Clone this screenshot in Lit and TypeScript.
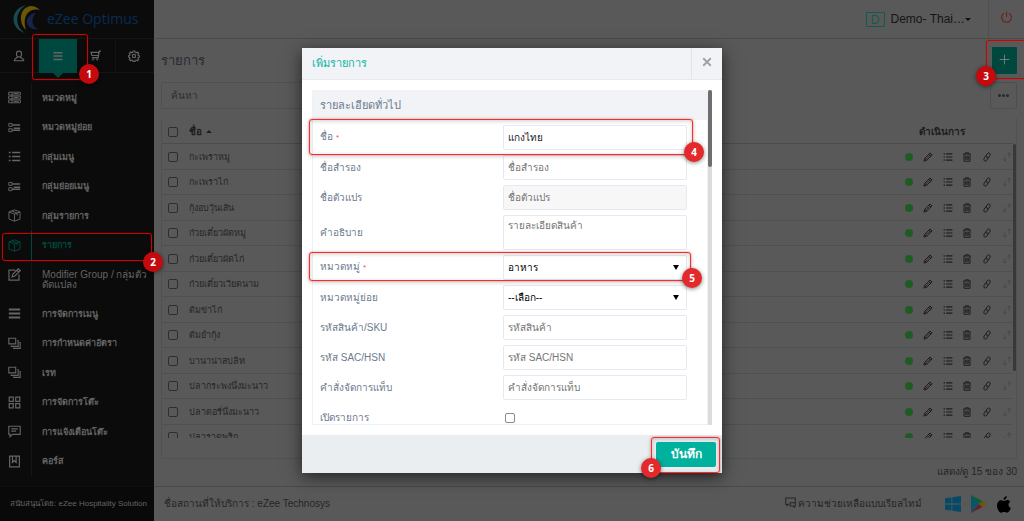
import { LitElement, html, css, svg, nothing } from "lit";
import { customElement, property, state } from "lit/decorators.js";

const ICONS: Record<string, unknown> = {
  user: svg`<path stroke-width="1.500" d="M8 1.500c2.200 0 3.400 1.600 3.400 3.600 0 2-1.200 4.400-3.400 4.400S4.600 7.100 4.600 5.100C4.600 3.100 5.800 1.500 8 1.500zM6.300 9.200c-.2 1.800-4.300 1.300-4.600 5.100h12.600c-.3-3.800-4.400-3.300-4.600-5.100"/>`,
  bars: svg`<path stroke-width="2" d="M2 3.500h12M2 8h12M2 12.500h12"/>`,
  menu: svg`<path stroke-width="2.600" d="M1 3h14M1 8h14M1 13h14"/>`,
  cart: svg`<path stroke-width="1.800" d="M16 1.500h-2.500L11.800 11H3M13 3.500H1.500L2.800 8h9.400"/><circle cx="4.500" cy="13.700" r="1.200"/><circle cx="10.500" cy="13.700" r="1.200"/>`,
  gear: svg`<circle cx="8" cy="8" r="2.200" stroke-width="1.500"/><path stroke-width="1.600" d="M6.800 1.300h2.400l.4 1.800 1.300.6 1.700-1 1.600 1.700-1 1.600.6 1.300 1.500.3v1.900l-1.600.4-.5 1.300 1 1.600-1.700 1.600-1.600-1-1.300.5-.4 1.700H6.800l-.4-1.700-1.300-.5-1.600 1-1.700-1.600 1-1.600-.6-1.300-1.500-.4V7.700l1.500-.4.6-1.300-1-1.600 1.700-1.700 1.600 1 1.300-.6z"/>`,
  server: svg`<path d="M.8 1.500h14.400v3.400H.8zM.8 6.300h14.400v3.400H.8zM.8 11.100h14.400v3.400H.8zM5 1.500v13M7 3.200h6M7 8h6M7 12.800h6"/>`,
  sublist: svg`<path d="M1 3h4v3.600H1zM1 9.500h4v3.600H1z"/><path stroke-width="1.800" d="M5 4.800h10M5 11.300h10M7 8.800h8"/>`,
  list: svg`<path stroke-width="1.900" d="M1 3h2.200M1 8h2.200M1 13h2.200M5 3h10M5 8h10M5 13h10"/>`,
  box: svg`<path d="M8 1l6.800 2.600v8.800L8 15l-6.800-2.600V3.600zM1.200 3.600L8 6.300l6.800-2.700M8 6.300V15M4.500 2.300l6.800 2.700v3"/>`,
  edit: svg`<path stroke-width="1.500" d="M9 2.500H1.200v12.300h12.300V8M5 11l.8-3.200L12.600 1l2.400 2.300-6.900 6.900zM11 2.800l2.200 2.200"/>`,
  copies: svg`<path stroke-width="1.400" d="M1 1.500h8.500v7H1zM11.500 4.500h1v7h-8.500v-1M14 7h1v7H7v-1"/>`,
  grid: svg`<path stroke-width="1.500" d="M1.500 1.500h5v5h-5zM9.500 1.500h5v5h-5zM1.500 9.500h5v5h-5zM9.500 9.500h5v5h-5z"/>`,
  message: svg`<path stroke-width="1.400" d="M1 1.500h14v10H5.500L2.500 14.500v-3H1zM4 4.800h8M4 7.500h6"/>`,
  book: svg`<path stroke-width="1.500" d="M2 1.500h12v13H2zM5.500 1.500V9L7.700 7 10 9V1.500"/>`,
  pencil: svg`<path stroke-width="1.600" d="M1.500 14.500l1.300-4.300 8.500-8.700 3.200 3.200-8.700 8.500zM9.500 3.500l3 3M2.800 10.200l3 3"/><path stroke-width="1" d="M5 11l6-6"/>`,
  trash: svg`<path stroke-width="1.600" d="M2 3.200h12M5.500 3V1.300h5V3M3.200 3.500v11.300h9.600V3.500M6 6v6.500M8 6v6.500M10 6v6.500"/>`,
  link: svg`<path stroke-width="1.600" d="M7.500 8.500c-1.500-1-1-2.500-.5-3.500l1.500-2.500c1.600-2.300 5.500-.5 4.500 2.500l-1.600 3C10.500 9.500 9 9.800 7.800 9M8.500 7.500c1.500 1 1 2.500.5 3.500l-1.500 2.500c-1.600 2.300-5.500.5-4.500-2.500l1.600-3C5.500 6.500 7 6.200 8.200 7"/>`,
  move: svg`<path d="M11.500 9V1.500M8.800 4.200l2.700-2.700 2.700 2.700M4.500 7v7.500M1.800 11.800l2.700 2.700 2.700-2.700"/>`,
  power: svg`<path stroke-width="1.400" d="M8 1v6.500M4.800 2.800a6 6 0 1 0 6.400 0"/>`,
  plus: svg`<path stroke-width="1.300" d="M8 1v14M1 8h14"/>`,
  close: svg`<path stroke-width="3" d="M2 2l12 12M14 2L2 14"/>`,
  chat: svg`<path stroke-width="1.500" d="M6 10.500H5L3 12.500v-2H1V1.500h14v7M7.500 8.500H15v4.500h-1.500v2L11 13H7.500z"/>`,
};

const icon = (name: string, size: number) => html`<svg
  width=${size} height=${size} viewBox="0 0 16 16" fill="none"
  stroke="currentColor" stroke-width="1.200" aria-hidden="true">${ICONS[name]}</svg>`;

const base = css`
  * { box-sizing: border-box; }
  svg { display: block; flex: none; }
  button, input, select, textarea { font: inherit; color: inherit; margin: 0; }
  button { border: 0; padding: 0; background: none; display: grid; place-items: center; cursor: pointer; }
  a { color: inherit; text-decoration: none; }
`;

@customElement("step-mark")
class StepMark extends LitElement {
  @property() n = "";
  @property() corner = "se";
  static styles = css`
    :host {
      position: absolute; box-sizing: border-box; pointer-events: none; z-index: 5;
      border: 1px solid #ff2a2a; border-radius: 3px;
      box-shadow: 0 0 1px #ff2a2a, 0 1px 4px rgba(0, 0, 0, .25), inset 0 1px 4px rgba(0, 0, 0, .2);
    }
    :host([dim]) { border-color: #d40000; box-shadow: 0 0 1px #c00000; }
    .badge {
      position: absolute; bottom: var(--drop, -8px); width: 20px; height: 20px; border-radius: 50%;
      display: grid; place-items: center; background: #e3292c; color: #fff;
      font: bold 10px/20px "Open Sans", sans-serif;
      box-shadow: 0 1px 4px rgba(0, 0, 0, .5);
    }
    :host([dim]) .badge { background: #c40a0c; }
    .se { right: -12px; }
    .sw { left: -11px; }
  `;
  render() {
    return html`<span class="badge ${this.corner}">${this.n}</span>`;
  }
}

@customElement("side-bar")
class SideBar extends LitElement {
  items = [
    ["server", "หมวดหมู่"], ["sublist", "หมวดหมู่ย่อย"], ["list", "กลุ่มเมนู"],
    ["sublist", "กลุ่มย่อยเมนู"], ["box", "กลุ่มรายการ"], ["box", "รายการ"],
    ["edit", "Modifier Group / กลุ่มตัวดัดแปลง"], ["menu", "การจัดการเมนู"],
    ["copies", "การกำหนดค่าอัตรา"], ["copies", "เรท"], ["grid", "การจัดการโต๊ะ"],
    ["message", "การแจ้งเตือนโต๊ะ"], ["book", "คอร์ส"],
  ];
  static styles = [base, css`
    :host { display: flex; flex-direction: column; background: #0b0b0b; color: #646464; min-height: 0; position: relative; }
    .brand { display: flex; align-items: center; gap: 6px; height: 39px; padding-left: 13px;
      border-bottom: 1px solid #151515; color: #082c54; font: 14px/20px "Open Sans", sans-serif; }
    .tabs { display: grid; grid-template-columns: repeat(4, 1fr); height: 34px; border-bottom: 1px solid #151515; }
    .tab { border-right: 1px solid #131313; position: relative; height: 33px; }
    .tab.on { background: #00483f; height: 34px; border: 0; }
    .tab.on::after { content: ""; position: absolute; top: 100%; left: 50%; margin-left: -5px;
      border: 5px solid transparent; border-top-color: #00483f; border-bottom: 0; }
    nav { flex: 1; display: flex; flex-direction: column; padding: 10px 0 10px; min-height: 0; }
    .item { flex: 1; display: grid; grid-template-columns: 32px 1fr; font-weight: bold; font-size: 9px; line-height: 10px; }
    .item.tall { flex: 0 0 39px; font-weight: normal; font-size: 10px; }
    .item .pic { border-right: 1px solid #161616; display: flex; align-items: center; padding-left: 8px; }
    .item .label { align-self: center; padding: 0 3px 0 10px; }
    .item.tall .pic { align-items: flex-start; padding-top: 8px; }
    .item.tall .label { align-self: start; padding-top: 10px; }
    .item.on { color: #00483f; }
    .item.on .pic { border-color: #00483f; }
    footer { height: 35px; border-top: 1px solid #0e0e0e; background: #090909; padding-left: 10px; font-size: 8px; line-height: 34px; white-space: nowrap; }
  `];
  render() {
    return html`
      <div class="brand">
        <svg width="28" height="30" viewBox="0 0 28 30" fill="none">
          <path d="M13 1C-3 5-4 24 12 29 1 22 2 8 13 1z" fill="#1c4a4c"/>
          <path d="M27 6C18-3 7 4 8 15c0 5 2 8 5 11C9 15 14 3 27 6z" fill="#6a5606"/>
          <path d="M23 9c-12 1-13 18 3 16-7-1-9-10-3-16z" fill="#18224a"/>
        </svg>
        <span>eZee Optimus</span>
      </div>
      <div class="tabs">
        <button class="tab" aria-label="ผู้ใช้">${icon("user", 12)}</button>
        <button class="tab on" aria-label="เมนู">${icon("bars", 12)}</button>
        <button class="tab" aria-label="รถเข็น">${icon("cart", 11)}</button>
        <button class="tab" aria-label="ตั้งค่า">${icon("gear", 12)}</button>
      </div>
      <nav>
        ${this.items.map(([ic, label], i) => html`
          <a href="#" class="item ${i === 5 ? "on" : ""} ${i === 6 ? "tall" : ""}">
            <span class="pic">${icon(ic, 13)}</span><span class="label">${label}</span>
          </a>`)}
      </nav>
      <footer>สนับสนุนโดย: eZee Hospitality Solution</footer>`;
  }
}

@customElement("item-table")
class ItemTable extends LitElement {
  rows = ["กะเพราหมู", "กะเพราไก่", "กุ้งอบวุ้นเส้น", "ก๋วยเตี๋ยวผัดหมู", "ก๋วยเตี๋ยวผัดไก่",
    "ก๋วยเตี๋ยวเวียดนาม", "ต้มข่าไก่", "ต้มยำกุ้ง", "บานาน่าสปลิท", "ปลากระพงนึ่งมะนาว",
    "ปลาดอรี่นึ่งมะนาว", "ปลาราดพริก"];
  static styles = [base, css`
    :host { display: flex; flex: 1; min-height: 0; border: 1px solid #525252; border-top: 0; padding-bottom: 20px; }
    .clip { flex: 1; overflow: hidden; }
    table { width: 100%; border-collapse: collapse; table-layout: fixed; font-size: 9px; line-height: 14px; }
    tr { height: 25px; }
    tbody tr:nth-child(odd) { height: 26px; }
    th, td { padding: 1px 0 0; text-align: left; border-bottom: 1px solid #505050; font-weight: normal; }
    th { font-weight: bold; font-size: 10px; color: #1e1e1e; border-color: #4c4c4c; padding-top: 3px; }
    .pick { width: 27px; padding-left: 6px; }
    .acts { width: 125px; }
    th.acts { text-align: center; padding-right: 18px; }
    input { appearance: none; display: block; width: 10px; height: 10px; border: 1px solid #2e2e2e; border-radius: 2px; }
    .sort { display: flex; align-items: center; gap: 4px; }
    .sort i { border: 3px solid transparent; border-bottom-color: #1e1e1e; border-top: 0; }
    .row { display: flex; justify-content: space-between; align-items: center; width: 107px; margin: 0 1px 0 auto; color: #1c1c1c; }
    .dot { width: 8px; height: 8px; border-radius: 50%; background: #1f5c24; }
    .faint { color: #444; }
    .bar { width: 3px; height: 227px; margin-top: 26px; background: #383838; border-radius: 2px; }
  `];
  render() {
    return html`
      <div class="clip"><table>
        <thead><tr>
          <th class="pick"><input type="checkbox" aria-label="เลือกทั้งหมด"></th>
          <th><span class="sort">ชื่อ <i></i></span></th>
          <th class="acts">ดำเนินการ</th>
        </tr></thead>
        <tbody>${this.rows.map((name) => html`<tr>
          <td class="pick"><input type="checkbox" aria-label=${name}></td>
          <td>${name}</td>
          <td class="acts"><div class="row">
            <span class="dot"></span>
            <button aria-label="แก้ไข">${icon("pencil", 10)}</button>
            <button aria-label="รายละเอียด">${icon("list", 10)}</button>
            <button aria-label="ลบ">${icon("trash", 10)}</button>
            <button aria-label="ลิงก์">${icon("link", 10)}</button>
            <button class="faint" aria-label="ย้าย">${icon("move", 10)}</button>
          </div></td>
        </tr>`)}</tbody>
      </table></div>
      <div class="bar"></div>`;
  }
}

type Field = { id: string; label: string; kind?: string; value?: string; hint?: string; need?: boolean };

@customElement("item-dialog")
class ItemDialog extends LitElement {
  @state() fields: Field[] = [
    { id: "name", label: "ชื่อ", value: "แกงไทย", need: true },
    { id: "alt", label: "ชื่อสำรอง", hint: "ชื่อสำรอง" },
    { id: "variant", label: "ชื่อตัวแปร", hint: "ชื่อตัวแปร", kind: "off" },
    { id: "desc", label: "คำอธิบาย", hint: "รายละเอียดสินค้า", kind: "area" },
    { id: "cat", label: "หมวดหมู่", value: "อาหาร", need: true, kind: "select" },
    { id: "sub", label: "หมวดหมู่ย่อย", value: "--เลือก--", kind: "select" },
    { id: "sku", label: "รหัสสินค้า/SKU", hint: "รหัสสินค้า" },
    { id: "hsn", label: "รหัส SAC/HSN", hint: "รหัส SAC/HSN" },
    { id: "tab", label: "คำสั่งจัดการแท็บ", hint: "คำสั่งจัดการแท็บ" },
    { id: "open", label: "เปิดรายการ", kind: "check" },
  ];
  static styles = [base, css`
    :host { display: flex; flex-direction: column; position: relative; width: 420px; height: 425px;
      background: #fff; color: #6c7a8e; box-shadow: 0 4px 16px rgba(0, 0, 0, .6); font-size: 10px; line-height: 14px; }
    header { display: flex; height: 32px; background: #f1f3f7; border-bottom: 1px solid #e6e9ee; }
    h2 { flex: 1; margin: 0; padding-left: 10px; font-size: 11px; line-height: 30px; font-weight: normal; color: #10b5a2; }
    .x { width: 31px; border-left: 1px solid #e2e5ea; color: #a0a2a6; padding-bottom: 4px; }
    .body { flex: 1; min-height: 0; display: flex; padding: 10px 10px 10px; }
    .panel { flex: 1; overflow: hidden; border: 1px solid #eef1f5; border-top: 0; }
    h3 { margin: 0; height: 30px; padding-left: 7px; background: #f1f3f7; font-size: 11px; line-height: 30px; font-weight: normal; }
    .form { display: grid; gap: 5px; padding: 5px 20px 0 7px; }
    .field { display: grid; grid-template-columns: 1fr 184px; align-items: center; min-height: 25px; }
    .need { color: #f44; padding-left: 3px; font-size: 8px; }
    .ctl { width: 100%; height: 25px; border: 1px solid #e4eaf0; border-radius: 2px; background: #fff;
      padding: 0 4px; color: #222; outline: 0; display: block; resize: none; }
    .ctl::placeholder { color: #757575; opacity: 1; }
    .ctl:disabled { background: #f7f7f7; }
    .area { height: 35px; padding-top: 3px; overflow: hidden; }
    .drop { position: relative; }
    .drop select { appearance: none; color: #000; }
    .drop svg { position: absolute; right: 8px; top: 10px; pointer-events: none; }
    .check { appearance: none; width: 10px; height: 10px; border: 1px solid #8a8a8a; border-radius: 2px; margin-left: 2px; }
    .track { width: 4px; background: #dcdcdc; }
    .thumb { width: 4px; height: 77px; border-radius: 2px; background: #6e6e6e; }
    footer { display: flex; justify-content: flex-end; align-items: center; height: 38px; background: #eaeef1; padding-right: 6px; }
    .save { width: 60px; height: 25px; background: #00b19d; color: #fff; border-radius: 2px; font-size: 12px; font-weight: bold; }
    .m4 { left: 7px; top: 71px; width: 384px; height: 36px; }
    .m5 { left: 7px; top: 204px; width: 382px; height: 29px; }
    .m6 { left: 349px; top: 389px; width: 69px; height: 36px; --drop: -6px; }
  `];
  control(f: Field) {
    if (f.kind === "area") return html`<textarea id=${f.id} class="ctl area" placeholder=${f.hint ?? ""}></textarea>`;
    if (f.kind === "check") return html`<input id=${f.id} class="check" type="checkbox">`;
    if (f.kind === "select") return html`<span class="drop"><select id=${f.id} class="ctl"><option>${f.value}</option></select>
      <svg width="6" height="5" viewBox="0 0 6 5"><path d="M0 0h6L3 5z"/></svg></span>`;
    return html`<input id=${f.id} class="ctl" type="text" .value=${f.value ?? ""} placeholder=${f.hint ?? ""} ?disabled=${f.kind === "off"}>`;
  }
  render() {
    return html`
      <header><h2>เพิ่มรายการ</h2><button class="x" aria-label="ปิด">${icon("close", 10)}</button></header>
      <div class="body">
        <div class="panel">
          <h3>รายละเอียดทั่วไป</h3>
          <div class="form">${this.fields.map((f) => html`<div class="field">
            <label for=${f.id}>${f.label}${f.need ? html`<span class="need">*</span>` : nothing}</label>
            ${this.control(f)}
          </div>`)}</div>
        </div>
        <div class="track"><div class="thumb"></div></div>
      </div>
      <footer><button class="save">บันทึก</button></footer>
      <step-mark class="m4" n="4"></step-mark>
      <step-mark class="m5" n="5"></step-mark>
      <step-mark class="m6" n="6" corner="sw"></step-mark>`;
  }
}

@customElement("app-root")
class AppRoot extends LitElement {
  static styles = [base, css`
    :host { display: grid; grid-template-columns: 154px 1fr; height: 100vh; position: relative; overflow: hidden;
      background: #595959; color: #262626; font: 10px/14px "Liberation Sans", sans-serif; }
    main { display: flex; flex-direction: column; min-width: 0; min-height: 0; }
    .top { display: flex; justify-content: flex-end; height: 39px; border-bottom: 1px solid #4b4b4b; }
    .who { display: flex; align-items: center; gap: 6px; padding-right: 17px; color: #151515; font-size: 12px; }
    .who b { border: 1px solid #14594f; color: #14594f; width: 19px; height: 15px; line-height: 14px; text-align: center; font-weight: normal; border-radius: 1px; }
    .who i { border: 3px solid transparent; border-top-color: #111; border-bottom: 0; margin-left: -6px; }
    .off { width: 36px; border-left: 1px solid #505050; color: #6f2020; padding-bottom: 3px; }
    .content { flex: 1; min-height: 0; display: flex; flex-direction: column; padding: 0 7px; }
    .head { display: flex; justify-content: space-between; align-items: center; height: 43px; }
    h1 { margin: 0; font-size: 13px; line-height: 20px; font-weight: normal; color: #272b31; }
    .add { width: 25px; height: 27px; background: #00483f; color: #808080; border-radius: 1px; padding-bottom: 2px; }
    .find { display: flex; justify-content: space-between; margin-bottom: 9px; }
    .find input { width: 50%; height: 27px; border: 1px solid #505050; background: none; padding: 0 9px; border-radius: 2px; }
    .find input::placeholder { color: #2e2e2e; opacity: 1; }
    .find button { width: 27px; height: 27px; border: 1px solid #4e4e4e; border-radius: 2px; }
    .count { text-align: right; padding: 6px 0 7px; line-height: 14px; }
    .foot { display: flex; align-items: center; height: 35px; border-top: 1px solid #494949; padding: 0 13px 0 10px; }
    .foot .place { flex: 1; }
    .help { display: flex; align-items: center; gap: 2px; margin-right: 23px; }
    .help svg { margin-bottom: 3px; }
    .stores { display: flex; align-items: center; gap: 10px; }
    .veil { position: absolute; inset: 0; display: grid; place-items: center; }
    .m1 { left: 32px; top: 34px; width: 56px; height: 46px; --drop: -5px; }
    .m2 { left: 2px; top: 233px; width: 150px; height: 28px; --drop: -12px; }
    .m3 { left: calc(100% - 38px); top: 40px; width: 42px; height: 39px; }
  `];
  render() {
    return html`
      <side-bar></side-bar>
      <main>
        <div class="top">
          <div class="who"><b>D</b><span>Demo- Thai…</span><i></i></div>
          <button class="off" aria-label="ออกจากระบบ">${icon("power", 13)}</button>
        </div>
        <div class="content">
          <div class="head"><h1>รายการ</h1><button class="add" aria-label="เพิ่ม">${icon("plus", 11)}</button></div>
          <div class="find">
            <input type="text" placeholder="ค้นหา" aria-label="ค้นหา">
            <button aria-label="เพิ่มเติม"><svg width="11" height="3" viewBox="0 0 11 3" fill="#252a30"><circle cx="1.500" cy="1.500" r="1.500"/><circle cx="5.500" cy="1.500" r="1.500"/><circle cx="9.500" cy="1.500" r="1.500"/></svg></button>
          </div>
          <item-table></item-table>
          <div class="count">แสดง/ดู 15 ของ 30</div>
        </div>
        <div class="foot">
          <span class="place">ชื่อสถานที่ให้บริการ : eZee Technosys</span>
          <a class="help" href="#">${icon("chat", 11)}<span>ความช่วยเหลือแบบเรียลไทม์</span></a>
          <div class="stores">
            <a href="#" aria-label="Windows"><svg width="16" height="16" viewBox="0 0 16 16" fill="#064a68"><path d="M0 2.300L6.500 1.400v6.200H0zM7.300 1.300L16 0v7.600H7.300zM0 8.400h6.500v6.200L0 13.700zM7.300 8.400H16V16l-8.700-1.300z"/></svg></a>
            <a href="#" aria-label="Google Play"><svg width="16" height="18" viewBox="0 0 16 18"><path d="M0 0v18l8-9z" fill="#0a5468"/><path d="M0 0l11.500 6L8 9z" fill="#0b5f38"/><path d="M0 18l11.500-6L8 9z" fill="#6a1e28"/><path d="M11.500 6L16 9l-4.500 3L8 9z" fill="#6f5608"/></svg></a>
            <a href="#" aria-label="Apple"><svg width="14" height="17" viewBox="0 0 14 17"><path d="M9.800 0c.2 2-1.300 3.800-3.200 3.900C6.400 2 8.100.2 9.800 0zM7.100 5c.8 0 1.700-.9 3.100-.9 1.200 0 2.400.6 3.100 1.700-2.700 1.600-2.200 5.200.600 6.300-.9 2.400-2.300 4.700-3.800 4.700-1.100 0-1.500-.7-2.900-.7s-1.800.7-2.800.7C2.300 16.800 0 13 0 9.400 0 6.200 2 4.200 4.200 4.200c1.300 0 2.200.8 2.900.8z" fill="#000"/></svg></a>
          </div>
        </div>
      </main>
      <step-mark dim class="m1" n="1"></step-mark>
      <step-mark dim class="m2" n="2"></step-mark>
      <step-mark dim class="m3" n="3" corner="sw"></step-mark>
      <div class="veil"><item-dialog role="dialog"></item-dialog></div>`;
  }
}
